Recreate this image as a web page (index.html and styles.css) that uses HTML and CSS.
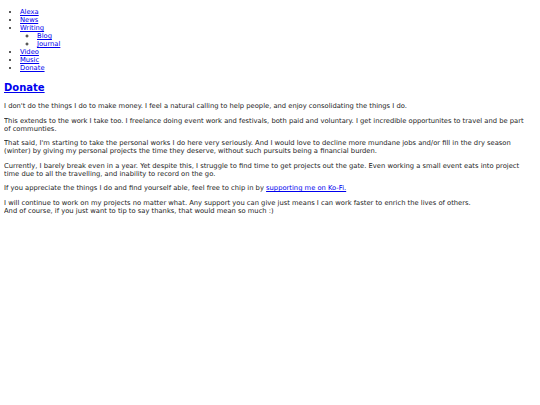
FILE: index.html
```html
<!DOCTYPE html>
<html>
<head>
<meta charset="utf-8">
<link rel="stylesheet" href="styles.css">
</head>
<body>
<ul class="nav">
  <li><a href="#">Alexa</a></li>
  <li><a href="#">News</a></li>
  <li><a href="#">Writing</a>
    <ul class="sub">
      <li><a href="#">Blog</a></li>
      <li><a href="#">Journal</a></li>
    </ul>
  </li>
  <li><a href="#">Video</a></li>
  <li><a href="#">Music</a></li>
  <li><a href="#">Donate</a></li>
</ul>
<h2 class="title"><a href="#">Donate</a></h2>
<p class="para">I don't do the things I do to make money. I feel a natural calling to help people, and enjoy consolidating the things I do.</p>
<p class="para">This extends to the work I take too. I freelance doing event work and festivals, both paid and voluntary. I get incredible opportunites to travel and be part of communties.</p>
<p class="para">That said, I'm starting to take the personal works I do here very seriously. And I would love to decline more mundane jobs and/or fill in the dry season (winter) by giving my personal projects the time they deserve, without such pursuits being a financial burden.</p>
<p class="para">Currently, I barely break even in a year. Yet despite this, I struggle to find time to get projects out the gate. Even working a small event eats into project time due to all the travelling, and inability to record on the go.</p>
<p class="para">If you appreciate the things I do and find yourself able, feel free to chip in by <a href="#">supporting me on Ko-Fi.</a></p>
<p class="para">I will continue to work on my projects no matter what. Any support you can give just means I can work faster to enrich the lives of others.<br>And of course, if you just want to tip to say thanks, that would mean so much :)</p>
</body>
</html>
```
FILE: styles.css
```css
html { background: #fff; }
body {
  margin: 8px 4px 4px 4px;
  font-family: "DejaVu Sans", Verdana, sans-serif;
  font-size: 6.75px;
  line-height: 8px;
  color: #222;
}
a { color: #0000ee; }
.nav {
  margin: 0;
  padding-left: 16px;
  list-style: disc;
}
.sub {
  margin: 0;
  padding-left: 17px;
  list-style: circle;
}
.title {
  font-size: 10px;
  line-height: 14px;
  margin: 9px 0 7px;
  font-weight: bold;
}
.para {
  margin: 6.6px 0;
  max-width: 527px;
}
```
